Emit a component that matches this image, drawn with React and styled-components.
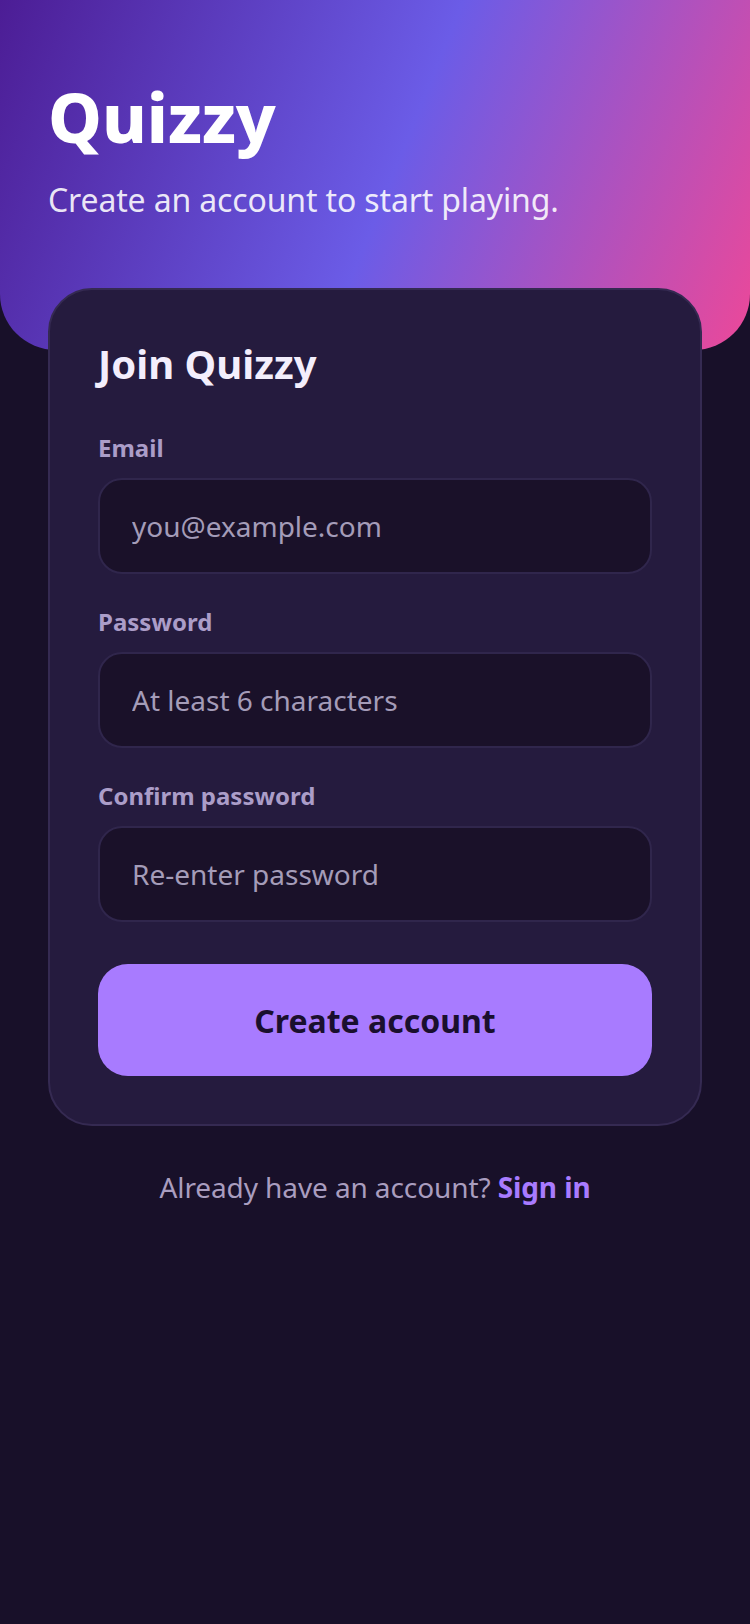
import React from "react";
import styled, { createGlobalStyle } from "styled-components";

const GlobalStyle = createGlobalStyle`
  * {
    box-sizing: border-box;
  }
  html, body {
    margin: 0;
    padding: 0;
    background: #181029;
  }
  body {
    font-family: "Noto Sans", "Open Sans", sans-serif;
    color: #f5f0ff;
  }
`;

const Page = styled.div`
  min-height: 1624px;
  background: #181029;
  display: flex;
  flex-direction: column;
`;

const Hero = styled.header`
  height: 350px;
  padding: 76px 48px 0;
  background: linear-gradient(112deg, #4c1d95 0%, #6b5ce7 52%, #ec4899 100%);
  border-radius: 0 0 56px 56px;
`;

const Brand = styled.h1`
  margin: 0;
  font-size: 68px;
  line-height: 1.2;
  font-weight: 800;
  color: #ffffff;
`;

const Tagline = styled.p`
  margin: 20px 0 0;
  font-size: 32px;
  line-height: 1.4;
  letter-spacing: -0.15px;
  color: rgba(255, 255, 255, 0.88);
`;

const Card = styled.main`
  margin: -62px 48px 0;
  padding: 48px;
  background: #251b3e;
  border: 2px solid #352a52;
  border-radius: 44px;
  position: relative;
`;

const CardTitle = styled.h2`
  margin: 0 0 40px;
  font-size: 40px;
  line-height: 1.3;
  font-weight: 700;
  color: #f3eefc;
`;

const Form = styled.form`
  display: flex;
  flex-direction: column;
  gap: 30px;
`;

const Field = styled.label`
  display: flex;
  flex-direction: column;
  gap: 12px;
`;

const FieldLabel = styled.span`
  font-size: 24px;
  line-height: 1.5;
  font-weight: 700;
  color: #ab9dc8;
`;

const Input = styled.input`
  height: 96px;
  width: 100%;
  padding: 0 32px;
  background: #1a1129;
  border: 2px solid #30264c;
  border-radius: 24px;
  font-family: inherit;
  font-size: 28px;
  color: #f3eefc;
  outline: none;

  &::placeholder {
    color: #a49cb8;
  }
`;

const Submit = styled.button`
  margin-top: 12px;
  height: 112px;
  width: 100%;
  border: none;
  border-radius: 30px;
  background: #a87bff;
  font-family: inherit;
  font-size: 32px;
  font-weight: 700;
  color: #1a0f2e;
  cursor: pointer;
`;

const Footer = styled.p`
  margin: 40px 0 0;
  text-align: center;
  font-size: 28px;
  line-height: 1.5;
  letter-spacing: -0.1px;
  color: #a99dbf;
`;

const SignIn = styled.a`
  color: #a87bff;
  font-weight: 700;
  text-decoration: none;
`;

const fields = [
  { id: "email", label: "Email", type: "email", placeholder: "you@example.com" },
  { id: "password", label: "Password", type: "password", placeholder: "At least 6 characters" },
  { id: "confirm", label: "Confirm password", type: "password", placeholder: "Re-enter password" },
];

const App = () => {
  return (
    <Page>
      <GlobalStyle />
      <Hero>
        <Brand>Quizzy</Brand>
        <Tagline>Create an account to start playing.</Tagline>
      </Hero>
      <Card>
        <CardTitle>Join Quizzy</CardTitle>
        <Form onSubmit={(e) => e.preventDefault()}>
          {fields.map((f) => (
            <Field key={f.id} htmlFor={f.id}>
              <FieldLabel>{f.label}</FieldLabel>
              <Input id={f.id} type={f.type} placeholder={f.placeholder} />
            </Field>
          ))}
          <Submit type="submit">Create account</Submit>
        </Form>
      </Card>
      <Footer>
        Already have an account? <SignIn href="#">Sign in</SignIn>
      </Footer>
    </Page>
  );
};

export default App;
